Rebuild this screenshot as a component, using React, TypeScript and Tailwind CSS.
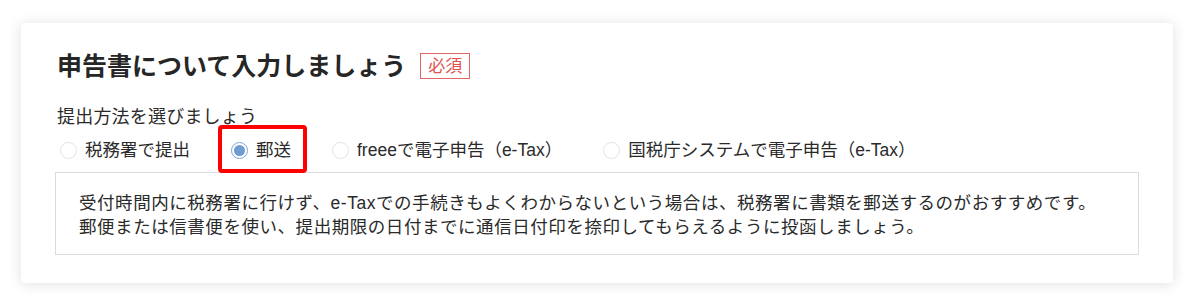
import React from "react";

const FONT = "font-['Liberation_Sans','Noto_Sans_CJK_JP',sans-serif]";

function Radio({ checked }: { checked?: boolean }) {
  if (checked) {
    return (
      <span className="flex h-[17px] w-[17px] shrink-0 items-center justify-center rounded-full border border-[#7ea3d3] bg-white">
        <span className="h-[11px] w-[11px] rounded-full bg-[#6f9ccf]" />
      </span>
    );
  }
  return <span className="h-[17px] w-[17px] shrink-0 rounded-full border border-[#e3e3e3] bg-white" />;
}

function Option({ label, checked }: { label: string; checked?: boolean }) {
  return (
    <label className="flex items-center gap-[8px]">
      <Radio checked={checked} />
      <span>{label}</span>
    </label>
  );
}

export default function App() {
  return (
    <div className={`${FONT} h-[303px] w-[1200px] bg-white pl-[21px] pr-[27px] pt-[23px] text-[#2a2a2a]`}>
      <div className="h-[260px] rounded-[4px] bg-white px-[34px] pb-[28px] pt-[27px] shadow-[0_1px_14px_rgba(0,0,0,0.13)]">
        <div className="flex items-center">
          <h1 className="pl-[2px] text-[25px] font-bold leading-[32px] text-[#262626]">
            申告書について入力しましょう
          </h1>
          <span className="ml-[14px] flex h-[26px] items-center border-[1.5px] border-[#e26464] px-[7px] text-[17px] leading-none text-[#e05252]">
            必須
          </span>
        </div>
        <div className="mt-[23px] pl-[2px] text-[18px] leading-[24px] tracking-[0.2px]">提出方法を選びましょう</div>
        <div className="relative mt-[9px] flex h-[24px] items-center gap-[41px] pl-[5px] text-[17.5px] leading-[24px]">
          <Option label="税務署で提出" />
          <Option label="郵送" checked />
          <Option label="freeeで電子申告（e-Tax）" />
          <Option label="国税庁システムで電子申告（e-Tax）" />
          <div className="pointer-events-none absolute left-[163px] top-[-13px] h-[48px] w-[89px] rounded-[4px] border-[4px] border-[#ff0000]" />
        </div>
        <div className="mt-[9.5px] border border-[#dcdcdc] pb-[15px] pl-[23px] pr-[20px] pt-[18px] text-[17.5px] leading-[24px] tracking-[0.55px]">
          <p>受付時間内に税務署に行けず、e-Taxでの手続きもよくわからないという場合は、税務署に書類を郵送するのがおすすめです。</p>
          <p>郵便または信書便を使い、提出期限の日付までに通信日付印を捺印してもらえるように投函しましょう。</p>
        </div>
      </div>
    </div>
  );
}
